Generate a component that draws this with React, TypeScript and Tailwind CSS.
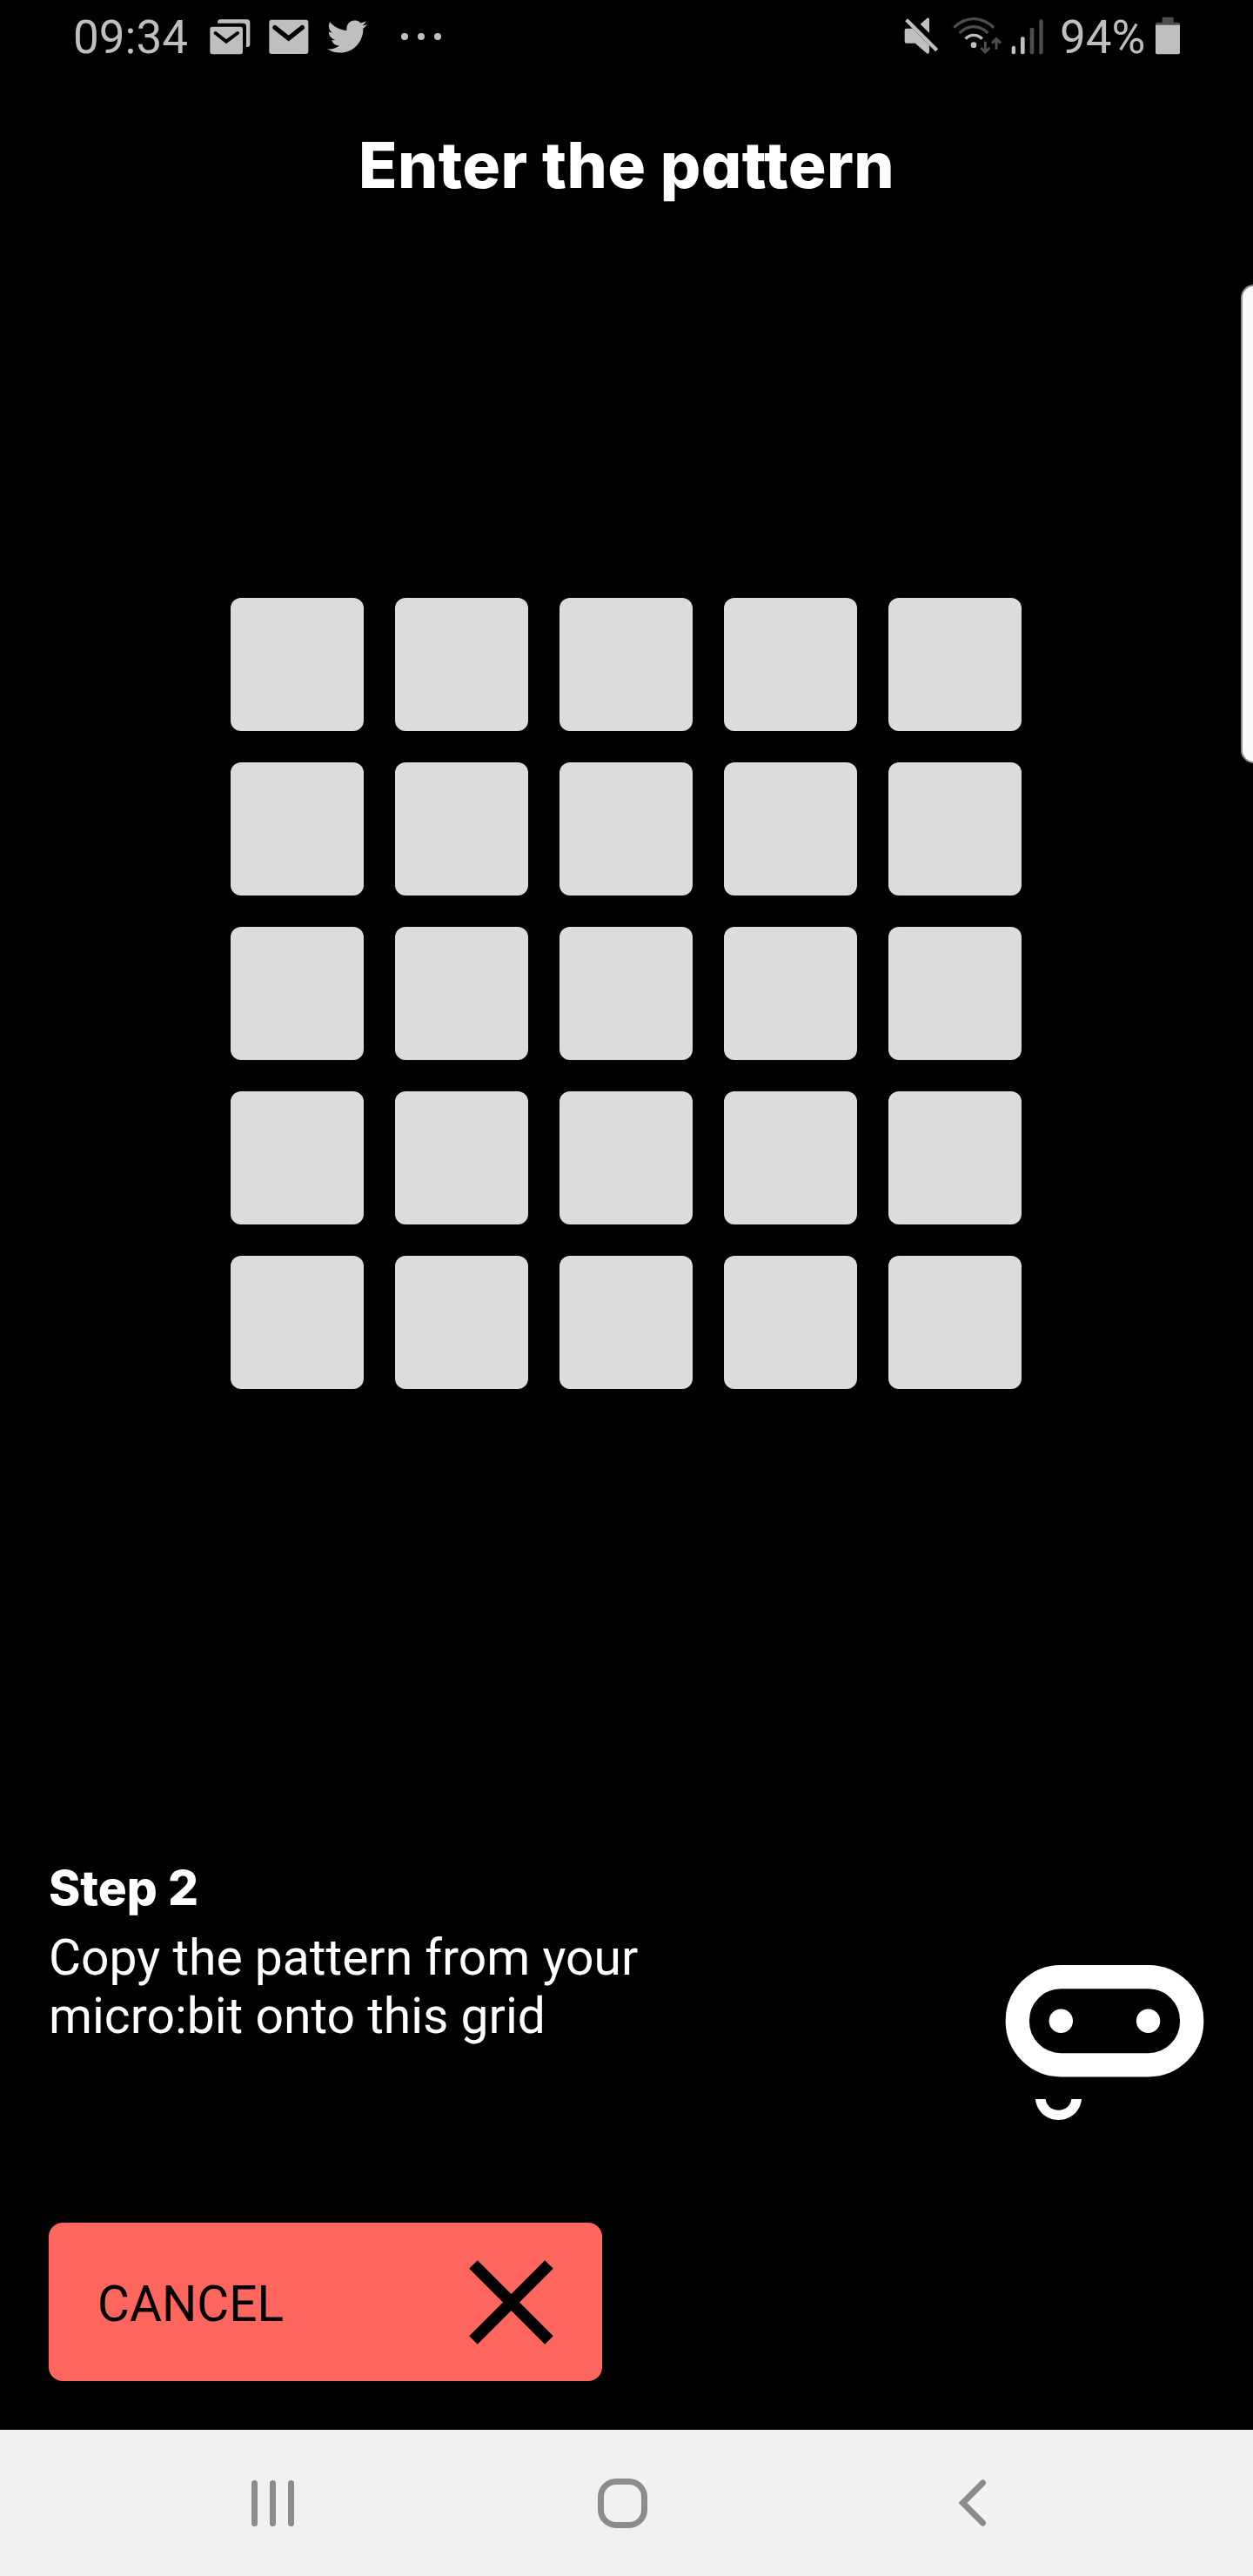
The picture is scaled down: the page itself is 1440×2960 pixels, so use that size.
import React from "react";

const GREY = "#bfbfbf";
const DIM = "#4d4d4d";

function MailStackIcon() {
  return (
    <svg className="w-[50px] h-[44px]" viewBox="540 60 150 132" fill={GREY}>
      <path d="M570 80 V77 Q571 67 580 67 H671 Q682 67 682 78 V152 Q682 161 673 162 H669 V91 Q669 80 658 80 Z" />
      <rect x="544" y="92" width="113" height="95" rx="9" />
      <path d="M563 114 L600 143 L639 114" fill="none" stroke="#000" strokeWidth="12" strokeLinecap="round" />
    </svg>
  );
}

function MailIcon() {
  return (
    <svg className="w-[50px] h-[44px]" viewBox="740 60 150 132" fill={GREY}>
      <rect x="747" y="68" width="135" height="118" rx="9" />
      <path d="M767 95 L814 132 L861 95" fill="none" stroke="#000" strokeWidth="16" strokeLinecap="round" />
    </svg>
  );
}

function BirdIcon() {
  return (
    <svg className="w-[46px] h-[38px]" viewBox="0 2 24 20" preserveAspectRatio="none" fill={GREY}>
      <path d="M23.953 4.57a10 10 0 01-2.825.775 4.958 4.958 0 002.163-2.723c-.951.555-2.005.959-3.127 1.184a4.92 4.92 0 00-8.384 4.482C7.69 8.095 4.067 6.13 1.64 3.162a4.822 4.822 0 00-.666 2.475c0 1.71.87 3.213 2.188 4.096a4.904 4.904 0 01-2.228-.616v.06a4.923 4.923 0 003.946 4.827 4.996 4.996 0 01-2.212.085 4.936 4.936 0 004.604 3.417 9.867 9.867 0 01-6.102 2.105c-.39 0-.779-.023-1.17-.067a13.995 13.995 0 007.557 2.209c9.053 0 13.998-7.496 13.998-13.985 0-.21 0-.42-.015-.63A9.935 9.935 0 0024 4.59z" />
    </svg>
  );
}

function MuteIcon() {
  return (
    <svg className="w-[42px] h-[46px]" viewBox="114 55 126 138" fill={GREY}>
      <path d="M173 84 L197 63 Q204 60 204 68 V115 Z" />
      <path d="M119 105 Q119 99 125 99 H146 L204 157 V180 Q203 189 195 185 L155 150 H125 Q119 150 119 144 Z" />
      <path d="M125 69 L230 174" stroke={GREY} strokeWidth="13" />
    </svg>
  );
}

function WifiIcon() {
  return (
    <svg className="w-[60px] h-[46px]" viewBox="280 55 180 138" fill="none" strokeWidth="10">
      <path d="M290 96 Q321 66 358 66 Q395 66 427 96" stroke={DIM} />
      <path d="M309 115 Q331 93 358 93 Q385 93 407 115" stroke={DIM} />
      <path d="M330 135 Q341 122 358 122 Q375 122 387 135" stroke={GREY} />
      <circle cx="358" cy="156" r="10" fill={GREY} />
      <path d="M398 144 V178 M383 166 L398 181 L413 166 M436 171 V137 M421 150 L436 135 L451 150" stroke={DIM} strokeWidth="9" />
    </svg>
  );
}

function SignalIcon() {
  return (
    <svg className="w-[40px] h-[46px]" viewBox="484 55 120 138">
      <rect x="489" y="159" width="13" height="29" rx="6" fill={GREY} />
      <rect x="520" y="128" width="14" height="60" rx="6" fill={GREY} />
      <rect x="552" y="96" width="14" height="92" rx="6" fill={DIM} />
      <rect x="584" y="68" width="13" height="120" rx="6" fill={DIM} />
    </svg>
  );
}

function BatteryIcon() {
  return (
    <svg className="w-[30px] h-[46px]" viewBox="981 55 90 138">
      <path d="M1007 64 Q1007 60 1011 60 H1042 Q1046 60 1046 64 V78 H1062 Q1068 78 1068 84 V88 H984 V84 Q984 78 990 78 H1007 Z" fill={DIM} />
      <path d="M984 87 H1068 V182 Q1068 188 1062 188 H990 Q984 188 984 182 Z" fill={GREY} />
    </svg>
  );
}

function StatusBar() {
  return (
    <header className="flex h-[88px] items-start text-[53px] leading-[62px] text-[#bfbfbf]">
      <span className="ml-[84px] mt-[12px] w-[156px] whitespace-nowrap">09:34</span>
      <div className="mt-[20px] flex items-start">
        <MailStackIcon />
        <div className="ml-[17px]"><MailIcon /></div>
        <div className="ml-[19px] mt-[3px]"><BirdIcon /></div>
        <div className="ml-[39px] mt-[18px] flex gap-[11px]">
          <i className="size-2 rounded-full bg-[#bfbfbf]" />
          <i className="size-2 rounded-full bg-[#bfbfbf]" />
          <i className="size-2 rounded-full bg-[#bfbfbf]" />
        </div>
      </div>
      <div className="ml-auto flex items-start pr-[83px]">
        <div className="mt-[18px] flex">
          <MuteIcon />
          <div className="ml-[13px]"><WifiIcon /></div>
          <div className="ml-[8px]"><SignalIcon /></div>
        </div>
        <span className="ml-[17px] mt-[12px] w-[109px] whitespace-nowrap">94%</span>
        <div className="mt-[18px]"><BatteryIcon /></div>
      </div>
    </header>
  );
}

function Robot() {
  return (
    <svg className="h-[180px] w-[230px]" viewBox="1155 2257 230 180">
      <rect x="1169.3" y="2271.6" width="200.4" height="101.2" rx="50" fill="none" stroke="#fff" strokeWidth="27.3" />
      <circle cx="1219.3" cy="2322.2" r="13.7" fill="#fff" />
      <circle cx="1319.6" cy="2322.2" r="13.7" fill="#fff" />
      <path d="M1190 2412 C1191 2425 1202 2436 1216.5 2436 C1231 2436 1242 2425 1243 2412 H1231.3 C1230.5 2419.5 1224.5 2424.7 1216.5 2424.7 C1208.5 2424.7 1202.5 2419.5 1201.7 2412 Z" fill="#fff" />
    </svg>
  );
}

function PatternGrid() {
  return (
    <div className="ml-[265px] mt-[425px] grid w-[909px] grid-cols-5 gap-9">
      {Array.from({ length: 25 }, (_, i) => (
        <button key={i} aria-label={`LED ${i + 1}`} className="size-[153px] rounded-xl bg-[#dcdcdc]" />
      ))}
    </div>
  );
}

function NavBar() {
  return (
    <nav className="mt-auto flex h-[168px] items-center bg-[#f1f1f1] text-[#8c8c8c]">
      <div className="ml-[289px] flex gap-[14px]">
        <i className="h-[53px] w-[7px] rounded-full bg-current" />
        <i className="h-[53px] w-[7px] rounded-full bg-current" />
        <i className="h-[53px] w-[7px] rounded-full bg-current" />
      </div>
      <div className="ml-[349px] size-[57px] rounded-[21px] border-[7px] border-current" />
      <svg className="ml-[356px] h-[56px] w-[36px]" viewBox="0 0 36 56" fill="none" stroke="currentColor" strokeWidth="7" strokeLinecap="round">
        <path d="M29.5 5 L6.5 28 L29.5 51" />
      </svg>
    </nav>
  );
}

export default function App() {
  return (
    <div className="relative flex h-[2960px] w-[1440px] flex-col overflow-hidden bg-black font-['Roboto',sans-serif] text-white">
      <StatusBar />
      <h1 className="mt-[58px] pl-[412px] whitespace-nowrap font-['Inter',sans-serif] text-[73px] font-extrabold leading-[88px] tracking-[0.4px] [font-feature-settings:'cv11','calt'_0]">
        Enter the pattern
      </h1>
      <div className="h-[28px]" />
      <PatternGrid />
      <div className="mt-[531px] flex h-[320px] justify-between pl-[56px] pr-[55px]">
        <section>
          <h2 className="mt-[9px] font-['Inter',sans-serif] text-[55px] font-extrabold leading-[66px]">Step 2</h2>
          <p className="mt-[14px] whitespace-nowrap text-[57px] leading-[67px]">
            Copy the pattern from your
            <br />
            micro:bit onto this grid
          </p>
        </section>
        <div className="mt-[130px]"><Robot /></div>
      </div>
      <button className="ml-[56px] mt-[107px] flex h-[182px] w-[636px] items-center justify-between rounded-2xl bg-[#ff665e] pl-[56px] pr-[56px] text-[56.7px] text-black">
        <span className="pt-[6px]">CANCEL</span>
        <svg className="size-[97px]" viewBox="0 0 97 97" stroke="#000" strokeWidth="13.5">
          <path d="M5 5 L92 92 M92 5 L5 92" />
        </svg>
      </button>
      <NavBar />
      <aside className="absolute left-[1426px] top-[327px] h-[550px] w-[30px] rounded-[17px] border-2 border-[#8f8f8f] bg-[#fafafa]" />
    </div>
  );
}
